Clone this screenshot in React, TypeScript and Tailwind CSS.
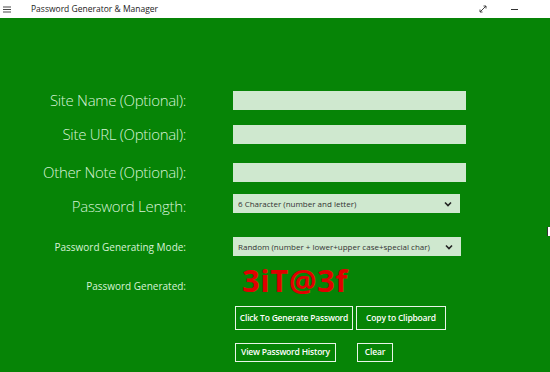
import React from 'react';

const font = { fontFamily: '"Open Sans", "Noto Sans", sans-serif' };

function Label({ children, small = false, offset = '' }: { children: React.ReactNode; small?: boolean; offset?: string }) {
  return (
    <div className={`h-[19px] flex items-center justify-end pr-[47px] ${offset}`}>
      <span
        className={
          small
            ? 'text-[10px] leading-none text-[#d6f2d6] whitespace-nowrap'
            : 'text-[15px] leading-none font-light tracking-[-0.3px] text-[#d6f2d6] whitespace-nowrap'
        }
      >
        {children}
      </span>
    </div>
  );
}

function TextBox() {
  return <div className="h-[19px] w-[233px] bg-[#cfe8cf]" />;
}

function Select({ text, width }: { text: string; width: string }) {
  return (
    <div className={`h-[19px] ${width} bg-[#cfe8cf] flex items-center justify-between pl-[5px] pr-[8px]`}>
      <span className="text-[8px] leading-none text-[#333333] whitespace-nowrap">{text}</span>
      <svg width="8" height="6" viewBox="0 0 8 6">
        <path d="M1 1.5 L4 4.5 L7 1.5" fill="none" stroke="#222" strokeWidth="1.6" />
      </svg>
    </div>
  );
}

function Btn({ children, width }: { children: React.ReactNode; width: string }) {
  return (
    <div className={`${width} h-full border-[1.5px] border-[#e8f5e8] flex items-center justify-center`}>
      <span className="text-[8.5px] leading-none font-semibold tracking-[-0.2px] text-white whitespace-nowrap">{children}</span>
    </div>
  );
}

export default function App() {
  return (
    <div className="w-[550px] h-[372px] overflow-hidden bg-[#068406] relative" style={font}>
      {/* Title bar */}
      <div className="h-[18px] bg-white flex items-center">
        <svg className="ml-[3px]" width="8" height="7" viewBox="0 0 8 7">
          <path d="M0 1h8M0 3.5h8M0 6h8" stroke="#333" strokeWidth="0.9" />
        </svg>
        <span className="ml-[20px] text-[8.5px] leading-none text-[#222]">Password Generator &amp; Manager</span>
        <div className="ml-auto flex items-center">
          <svg width="8" height="8" viewBox="0 0 8 8">
            <path d="M1 7L7 1M4.5 1H7V3.5M1 4.5V7H3.5" fill="none" stroke="#333" strokeWidth="0.9" />
          </svg>
          <div className="ml-[24px] mr-[32px] w-[7px] h-px bg-[#333]" />
        </div>
      </div>

      {/* Form */}
      <div className="grid grid-cols-[233px_1fr] pt-[73px]">
        <Label>Site Name (Optional):</Label>
        <TextBox />

        <div className="h-[15px] col-span-2" />
        <Label>Site URL (Optional):</Label>
        <TextBox />

        <div className="h-[19px] col-span-2" />
        <Label>Other Note (Optional):</Label>
        <TextBox />

        <div className="h-[12px] col-span-2" />
        <Label offset="pt-[6px]">Password Length:</Label>
        <Select text="6 Character (number and letter)" width="w-[227px]" />

        <div className="h-[24px] col-span-2" />
        <Label small>Password Generating Mode:</Label>
        <Select text="Random (number + lower+upper case+special char)" width="w-[228px]" />

        <div className="h-[6px] col-span-2" />
        <Label small offset="!h-[36px] pt-[12px]">Password Generated:</Label>
        <div className="h-[36px] flex items-center pl-[9px]">
          <span className="text-[31px] font-bold text-[#e00000] leading-none tracking-[0.5px]">3iT@3f</span>
        </div>

        <div className="h-[8px] col-span-2" />
        <div />
        <div className="h-[24px] flex gap-[3px] pl-[2px]">
          <Btn width="w-[118px]">Click To Generate Password</Btn>
          <Btn width="w-[90px]">Copy to Clipboard</Btn>
        </div>

        <div className="h-[13px] col-span-2" />
        <div />
        <div className="h-[19px] flex gap-[21px] pl-[2px]">
          <Btn width="w-[101px]">View Password History</Btn>
          <Btn width="w-[36px]">Clear</Btn>
        </div>
      </div>

      {/* mouse cursor at the edge */}
      <div className="absolute left-[547px] top-[227px] w-[3px] h-[9px] bg-white border-l border-[#333]" />
    </div>
  );
}
